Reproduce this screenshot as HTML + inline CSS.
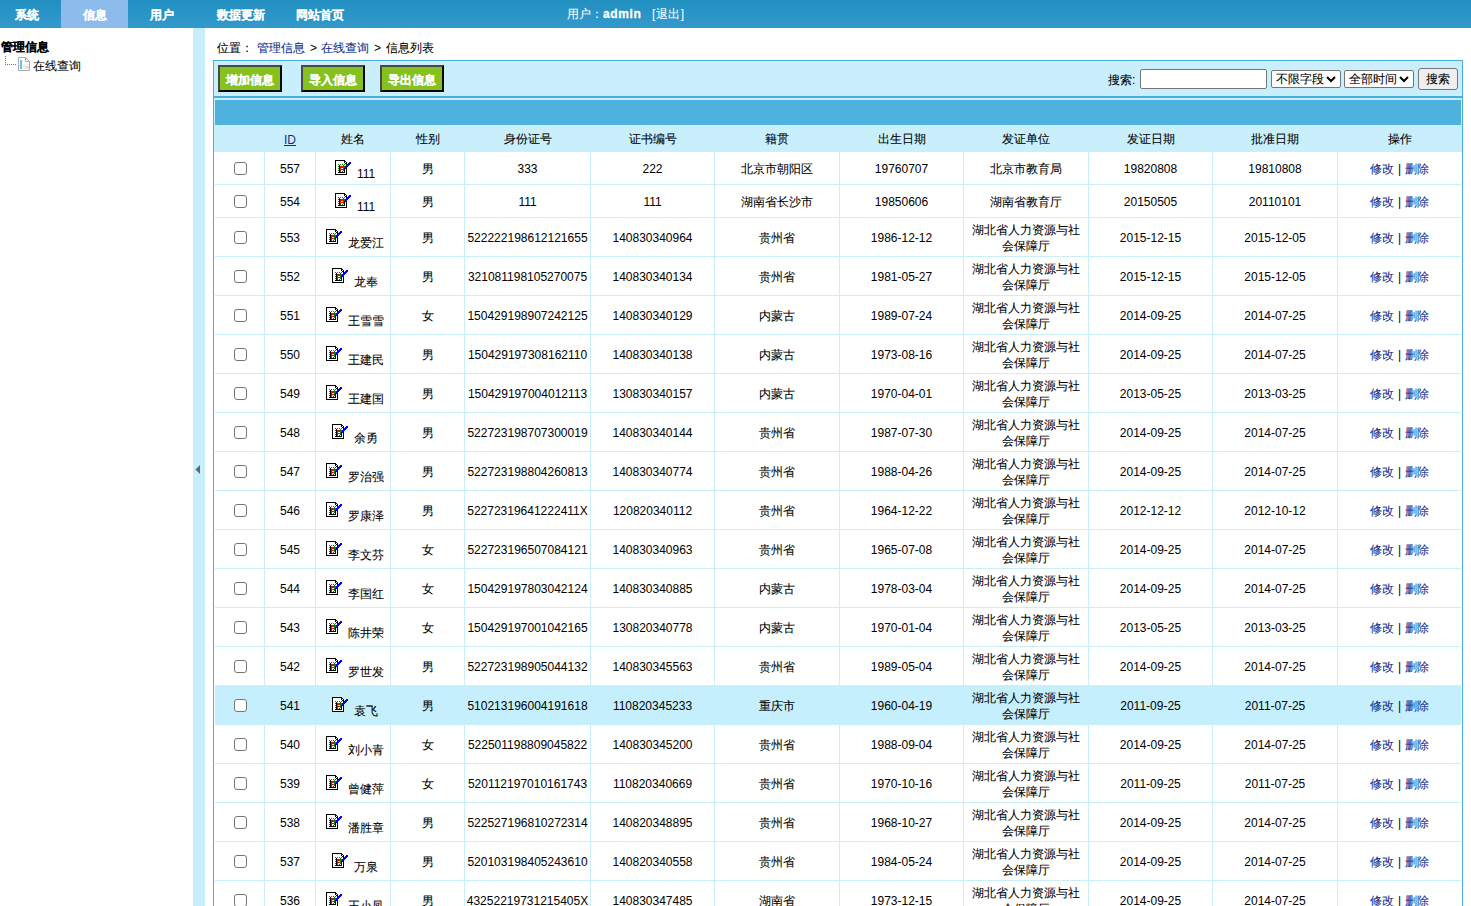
<!DOCTYPE html>
<html><head><meta charset="utf-8">
<style>
*{box-sizing:border-box}
html,body{margin:0;padding:0;width:1471px;height:906px;overflow:hidden;background:#fff;font-family:"Liberation Sans",sans-serif;font-size:12px;color:#000}
em{font-style:normal;-webkit-text-stroke:0.08px currentColor}
#nav b em,.btn em{-webkit-text-stroke:0.15px #fff}
#nav{position:absolute;left:0;top:0;width:1471px;height:28px;background:linear-gradient(#2190c0,#3399cc)}
#nav .act{position:absolute;left:61px;top:0;width:67px;height:28px;background:#8cbbec}
#nav b{position:absolute;top:8px;color:#fff;-webkit-text-stroke:0.3px #fff;font-size:12px;line-height:14px;white-space:nowrap}
#nav .usr{position:absolute;left:567px;top:7px;color:#fff;line-height:14px;white-space:nowrap}
#tree{position:absolute;left:1px;top:39px}
#tree .t1{font-weight:bold;line-height:14px;position:relative;top:1px}
#strip{position:absolute;left:193px;top:28px;width:12px;height:878px;background:#c6eefc}
#crumb{position:absolute;left:217px;top:41px;line-height:14px;white-space:nowrap}
#crumb a{color:#112e8a}
#box{position:absolute;left:213px;top:60px;width:1250px;height:900px;border:1px solid #4aaedc;border-bottom:0;background:#fff}
#tool{position:relative;height:37px;background:#c9effd;border-bottom:2px solid #4aaedc}
.btn{position:absolute;top:4px;width:64px;height:27px;background:#85c11f;border:2px solid;border-color:#4b4649 #000 #000 #4b4649;color:#fff;font-weight:bold;text-align:center;line-height:27px;-webkit-text-stroke:0.3px #fff}
#gap{height:2px;background:#c9effd}
#hbar{height:25px;border-left:1px solid #c9effd;border-right:1px solid #c9effd;background:#4fb2de}
#hrow{height:27px;background:#c9effd}
table{border-collapse:separate;border-spacing:0;table-layout:fixed;margin-left:1px;width:1246px}
td{border-right:1px solid #c9effd;border-bottom:1px solid #c9effd;text-align:center;padding:2px 0 0 0;vertical-align:middle;line-height:16px}
td:last-child{border-right:0}
#hrow td{border-color:#c9effd;height:27px;padding-top:2px}
#hrow a{color:#112e8a;text-decoration:underline;position:relative;top:1px}
.hl td{background:#c6effd;border-color:#c6effd}
.op{word-spacing:1px}
.op a{color:#112e8a}
.cb{display:inline-block;width:13px;height:13px;border:1px solid #767676;border-radius:3px;background:#fff;vertical-align:middle;position:relative;left:1px;top:-1px}
.ic{vertical-align:3px;margin-right:6px;position:relative;top:2px}
.nm span{position:relative;top:2px}
.nm{padding-left:4px}
.search{position:absolute;top:0;left:0}
.inp{position:absolute;border:1px solid #767676;background:#fff;border-radius:2px}
.sel{position:absolute;border:1px solid #767676;background:#fff;border-radius:2px;line-height:16px;padding-left:4px;white-space:nowrap}
.sel svg{position:absolute;right:4px;top:5px}
.sbtn{position:absolute;border:1px solid #767676;background:#efefef;border-radius:3px;text-align:center;line-height:20px}
</style></head><body>


<div id="nav">
 <div class="act"></div>
 <b style="left:15px"><em>系统</em></b>
 <b style="left:83px"><em>信息</em></b>
 <b style="left:150px"><em>用户</em></b>
 <b style="left:217px"><em>数据更新</em></b>
 <b style="left:296px"><em>网站首页</em></b>
 <div class="usr"><em>用户：</em><b style="position:static;letter-spacing:0.6px">admin</b></div><span style="position:absolute;left:652px;top:7px;color:#fff;line-height:14px;white-space:nowrap;letter-spacing:0.5px">[<em>退出</em>]</span>
</div>

<div id="tree">
 <div class="t1"><em>管理信息</em></div>
 <div style="position:relative;height:20px">
  <svg style="position:absolute;left:4px;top:3px" width="12" height="10"><rect x="0" y="0" width="1" height="1" fill="#777"/><rect x="0" y="2" width="1" height="1" fill="#777"/><rect x="0" y="4" width="1" height="1" fill="#777"/><rect x="0" y="6" width="1" height="1" fill="#777"/><rect x="0" y="8" width="1" height="1" fill="#777"/><rect x="2" y="8" width="1" height="1" fill="#777"/><rect x="4" y="8" width="1" height="1" fill="#777"/><rect x="6" y="8" width="1" height="1" fill="#777"/><rect x="8" y="8" width="1" height="1" fill="#777"/><rect x="10" y="8" width="1" height="1" fill="#777"/></svg>
  <svg style="position:absolute;left:17px;top:4px" width="13" height="15"><path d="M0.5 0.5H7.5L11.5 4.5V13.5H0.5Z" fill="#fff" stroke="#aaa"/><path d="M7.5 0.5V4.5H11.5" fill="none" stroke="#aaa"/><rect x="5" y="7" width="6" height="5" fill="#f2f2f2"/><rect x="7" y="9" width="4" height="3" fill="#e4e4e4"/><rect x="2" y="3" width="2" height="9" fill="#6cbde8"/></svg>
  <span style="position:absolute;left:32px;top:5px;white-space:nowrap"><em>在线查询</em></span>
 </div>
</div>

<div id="strip"><svg style="position:absolute;left:2px;top:437px" width="6" height="9"><path d="M5 0V9L0.5 4.5Z" fill="#666"/></svg></div>

<div id="crumb"><span style="position:absolute;left:0"><em>位置：</em></span><a style="position:absolute;left:40px"><em>管理信息</em></a><span style="position:absolute;left:93px">&gt;</span><a style="position:absolute;left:104px"><em>在线查询</em></a><span style="position:absolute;left:157px">&gt;</span><span style="position:absolute;left:169px"><em>信息列表</em></span></div>

<div id="box">
 <div id="tool">
  <div class="btn" style="left:4px"><em>增加信息</em></div>
  <div class="btn" style="left:87px"><em>导入信息</em></div>
  <div class="btn" style="left:166px"><em>导出信息</em></div>
  <span style="position:absolute;left:894px;top:12px;line-height:14px"><em>搜索</em>:</span>
  <div class="inp" style="left:926px;top:8px;width:127px;height:20px"></div>
  <div class="sel" style="left:1057px;top:9px;width:70px;height:18px"><em>不限字段</em><svg width="10" height="7"><path d="M1 1L5 5L9 1" fill="none" stroke="#000" stroke-width="2"/></svg></div>
  <div class="sel" style="left:1130px;top:9px;width:70px;height:18px"><em>全部时间</em><svg width="10" height="7"><path d="M1 1L5 5L9 1" fill="none" stroke="#000" stroke-width="2"/></svg></div>
  <div class="sbtn" style="left:1204px;top:7px;width:40px;height:22px"><em>搜索</em></div>
 </div>
 <div id="gap"></div>
 <div id="hbar"></div>
 <div id="hrow">
 <table><colgroup><col style="width:50px"><col style="width:51px"><col style="width:75px"><col style="width:74px"><col style="width:126px"><col style="width:124px"><col style="width:125px"><col style="width:124px"><col style="width:125px"><col style="width:124px"><col style="width:125px"><col style="width:123px"></colgroup>
 <tr><td></td><td><a>ID</a></td><td><em>姓名</em></td><td><em>性别</em></td><td><em>身份证号</em></td><td><em>证书编号</em></td><td><em>籍贯</em></td><td><em>出生日期</em></td><td><em>发证单位</em></td><td><em>发证日期</em></td><td><em>批准日期</em></td><td><em>操作</em></td></tr>
 </table>
 </div>
 <table><colgroup><col style="width:50px"><col style="width:51px"><col style="width:75px"><col style="width:74px"><col style="width:126px"><col style="width:124px"><col style="width:125px"><col style="width:124px"><col style="width:125px"><col style="width:124px"><col style="width:125px"><col style="width:123px"></colgroup>
<tr style="height:33px"><td><i class="cb"></i></td><td>557</td><td class="nm"><svg class="ic" width="16" height="15"><rect x="0" y="0" width="10" height="1" fill="#000"/><rect x="0" y="0" width="1" height="15" fill="#000"/><rect x="0" y="14" width="12" height="1" fill="#000"/><rect x="11" y="3" width="1" height="12" fill="#000"/><rect x="1" y="1" width="10" height="13" fill="#fff"/><rect x="9" y="1" width="1" height="1" fill="#000"/><rect x="10" y="1" width="1" height="1" fill="#000"/><rect x="10" y="2" width="1" height="1" fill="#fff"/><rect x="11" y="2" width="1" height="1" fill="#000"/><rect x="9" y="2" width="1" height="1" fill="#000"/><rect x="10" y="3" width="1" height="1" fill="#000"/><rect x="3" y="4" width="1" height="1" fill="#080"/><rect x="5" y="4" width="1" height="1" fill="#080"/><rect x="7" y="4" width="1" height="1" fill="#080"/><rect x="9" y="4" width="1" height="1" fill="#080"/><rect x="3" y="6" width="1" height="1" fill="#080"/><rect x="3" y="8" width="1" height="1" fill="#080"/><rect x="3" y="10" width="1" height="1" fill="#080"/><rect x="5" y="11" width="1" height="1" fill="#080"/><rect x="7" y="11" width="1" height="1" fill="#080"/><rect x="4" y="5" width="1" height="7" fill="#000"/><rect x="5" y="6" width="3" height="5" fill="#f00"/><rect x="6" y="8" width="2" height="1" fill="#fff"/><rect x="6" y="10" width="2" height="1" fill="#fff"/><rect x="8" y="5" width="1" height="4" fill="#080"/><rect x="9" y="6" width="1" height="2" fill="#080"/><rect x="8" y="9" width="1" height="2" fill="#080"/><rect x="3" y="12" width="7" height="1" fill="#000"/><rect x="9" y="8" width="1" height="5" fill="#000"/><rect x="10" y="6" width="1" height="1" fill="#00f"/><rect x="10" y="7" width="1" height="1" fill="#00f"/><rect x="10" y="8" width="1" height="1" fill="#00f"/><rect x="11" y="5" width="1" height="1" fill="#00f"/><rect x="11" y="6" width="1" height="1" fill="#00f"/><rect x="11" y="7" width="1" height="1" fill="#00f"/><rect x="12" y="4" width="1" height="1" fill="#00f"/><rect x="12" y="5" width="1" height="1" fill="#00f"/><rect x="12" y="6" width="1" height="1" fill="#00f"/><rect x="13" y="3" width="1" height="1" fill="#00f"/><rect x="13" y="4" width="1" height="1" fill="#00f"/><rect x="13" y="5" width="1" height="1" fill="#00f"/><rect x="14" y="2" width="1" height="1" fill="#00f"/><rect x="14" y="3" width="1" height="1" fill="#00f"/><rect x="14" y="4" width="1" height="1" fill="#00f"/><rect x="15" y="2" width="1" height="1" fill="#00f"/><rect x="15" y="3" width="1" height="1" fill="#00f"/></svg><span>111</span></td><td><em>男</em></td><td>333</td><td>222</td><td><em>北京市朝阳区</em></td><td>19760707</td><td class="u"><em>北京市教育局</em></td><td>19820808</td><td>19810808</td><td class="op"><a><em>修改</em></a> | <a><em>删除</em></a></td></tr>
<tr style="height:33px"><td><i class="cb"></i></td><td>554</td><td class="nm"><svg class="ic" width="16" height="15"><rect x="0" y="0" width="10" height="1" fill="#000"/><rect x="0" y="0" width="1" height="15" fill="#000"/><rect x="0" y="14" width="12" height="1" fill="#000"/><rect x="11" y="3" width="1" height="12" fill="#000"/><rect x="1" y="1" width="10" height="13" fill="#fff"/><rect x="9" y="1" width="1" height="1" fill="#000"/><rect x="10" y="1" width="1" height="1" fill="#000"/><rect x="10" y="2" width="1" height="1" fill="#fff"/><rect x="11" y="2" width="1" height="1" fill="#000"/><rect x="9" y="2" width="1" height="1" fill="#000"/><rect x="10" y="3" width="1" height="1" fill="#000"/><rect x="3" y="4" width="1" height="1" fill="#080"/><rect x="5" y="4" width="1" height="1" fill="#080"/><rect x="7" y="4" width="1" height="1" fill="#080"/><rect x="9" y="4" width="1" height="1" fill="#080"/><rect x="3" y="6" width="1" height="1" fill="#080"/><rect x="3" y="8" width="1" height="1" fill="#080"/><rect x="3" y="10" width="1" height="1" fill="#080"/><rect x="5" y="11" width="1" height="1" fill="#080"/><rect x="7" y="11" width="1" height="1" fill="#080"/><rect x="4" y="5" width="1" height="7" fill="#000"/><rect x="5" y="6" width="3" height="5" fill="#f00"/><rect x="6" y="8" width="2" height="1" fill="#fff"/><rect x="6" y="10" width="2" height="1" fill="#fff"/><rect x="8" y="5" width="1" height="4" fill="#080"/><rect x="9" y="6" width="1" height="2" fill="#080"/><rect x="8" y="9" width="1" height="2" fill="#080"/><rect x="3" y="12" width="7" height="1" fill="#000"/><rect x="9" y="8" width="1" height="5" fill="#000"/><rect x="10" y="6" width="1" height="1" fill="#00f"/><rect x="10" y="7" width="1" height="1" fill="#00f"/><rect x="10" y="8" width="1" height="1" fill="#00f"/><rect x="11" y="5" width="1" height="1" fill="#00f"/><rect x="11" y="6" width="1" height="1" fill="#00f"/><rect x="11" y="7" width="1" height="1" fill="#00f"/><rect x="12" y="4" width="1" height="1" fill="#00f"/><rect x="12" y="5" width="1" height="1" fill="#00f"/><rect x="12" y="6" width="1" height="1" fill="#00f"/><rect x="13" y="3" width="1" height="1" fill="#00f"/><rect x="13" y="4" width="1" height="1" fill="#00f"/><rect x="13" y="5" width="1" height="1" fill="#00f"/><rect x="14" y="2" width="1" height="1" fill="#00f"/><rect x="14" y="3" width="1" height="1" fill="#00f"/><rect x="14" y="4" width="1" height="1" fill="#00f"/><rect x="15" y="2" width="1" height="1" fill="#00f"/><rect x="15" y="3" width="1" height="1" fill="#00f"/></svg><span>111</span></td><td><em>男</em></td><td>111</td><td>111</td><td><em>湖南省长沙市</em></td><td>19850606</td><td class="u"><em>湖南省教育厅</em></td><td>20150505</td><td>20110101</td><td class="op"><a><em>修改</em></a> | <a><em>删除</em></a></td></tr>
<tr style="height:39px"><td><i class="cb"></i></td><td>553</td><td class="nm"><svg class="ic" width="16" height="15"><rect x="0" y="0" width="10" height="1" fill="#000"/><rect x="0" y="0" width="1" height="15" fill="#000"/><rect x="0" y="14" width="12" height="1" fill="#000"/><rect x="11" y="3" width="1" height="12" fill="#000"/><rect x="1" y="1" width="10" height="13" fill="#fff"/><rect x="9" y="1" width="1" height="1" fill="#000"/><rect x="10" y="1" width="1" height="1" fill="#000"/><rect x="10" y="2" width="1" height="1" fill="#fff"/><rect x="11" y="2" width="1" height="1" fill="#000"/><rect x="9" y="2" width="1" height="1" fill="#000"/><rect x="10" y="3" width="1" height="1" fill="#000"/><rect x="3" y="4" width="1" height="1" fill="#080"/><rect x="5" y="4" width="1" height="1" fill="#080"/><rect x="7" y="4" width="1" height="1" fill="#080"/><rect x="9" y="4" width="1" height="1" fill="#080"/><rect x="3" y="6" width="1" height="1" fill="#080"/><rect x="3" y="8" width="1" height="1" fill="#080"/><rect x="3" y="10" width="1" height="1" fill="#080"/><rect x="5" y="11" width="1" height="1" fill="#080"/><rect x="7" y="11" width="1" height="1" fill="#080"/><rect x="4" y="5" width="1" height="7" fill="#000"/><rect x="5" y="6" width="3" height="5" fill="#f00"/><rect x="6" y="8" width="2" height="1" fill="#fff"/><rect x="6" y="10" width="2" height="1" fill="#fff"/><rect x="8" y="5" width="1" height="4" fill="#080"/><rect x="9" y="6" width="1" height="2" fill="#080"/><rect x="8" y="9" width="1" height="2" fill="#080"/><rect x="3" y="12" width="7" height="1" fill="#000"/><rect x="9" y="8" width="1" height="5" fill="#000"/><rect x="10" y="6" width="1" height="1" fill="#00f"/><rect x="10" y="7" width="1" height="1" fill="#00f"/><rect x="10" y="8" width="1" height="1" fill="#00f"/><rect x="11" y="5" width="1" height="1" fill="#00f"/><rect x="11" y="6" width="1" height="1" fill="#00f"/><rect x="11" y="7" width="1" height="1" fill="#00f"/><rect x="12" y="4" width="1" height="1" fill="#00f"/><rect x="12" y="5" width="1" height="1" fill="#00f"/><rect x="12" y="6" width="1" height="1" fill="#00f"/><rect x="13" y="3" width="1" height="1" fill="#00f"/><rect x="13" y="4" width="1" height="1" fill="#00f"/><rect x="13" y="5" width="1" height="1" fill="#00f"/><rect x="14" y="2" width="1" height="1" fill="#00f"/><rect x="14" y="3" width="1" height="1" fill="#00f"/><rect x="14" y="4" width="1" height="1" fill="#00f"/><rect x="15" y="2" width="1" height="1" fill="#00f"/><rect x="15" y="3" width="1" height="1" fill="#00f"/></svg><span><em>龙爱江</em></span></td><td><em>男</em></td><td>522222198612121655</td><td>140830340964</td><td><em>贵州省</em></td><td>1986-12-12</td><td class="u"><em>湖北省人力资源与社</em><br><em>会保障厅</em></td><td>2015-12-15</td><td>2015-12-05</td><td class="op"><a><em>修改</em></a> | <a><em>删除</em></a></td></tr>
<tr style="height:39px"><td><i class="cb"></i></td><td>552</td><td class="nm"><svg class="ic" width="16" height="15"><rect x="0" y="0" width="10" height="1" fill="#000"/><rect x="0" y="0" width="1" height="15" fill="#000"/><rect x="0" y="14" width="12" height="1" fill="#000"/><rect x="11" y="3" width="1" height="12" fill="#000"/><rect x="1" y="1" width="10" height="13" fill="#fff"/><rect x="9" y="1" width="1" height="1" fill="#000"/><rect x="10" y="1" width="1" height="1" fill="#000"/><rect x="10" y="2" width="1" height="1" fill="#fff"/><rect x="11" y="2" width="1" height="1" fill="#000"/><rect x="9" y="2" width="1" height="1" fill="#000"/><rect x="10" y="3" width="1" height="1" fill="#000"/><rect x="3" y="4" width="1" height="1" fill="#080"/><rect x="5" y="4" width="1" height="1" fill="#080"/><rect x="7" y="4" width="1" height="1" fill="#080"/><rect x="9" y="4" width="1" height="1" fill="#080"/><rect x="3" y="6" width="1" height="1" fill="#080"/><rect x="3" y="8" width="1" height="1" fill="#080"/><rect x="3" y="10" width="1" height="1" fill="#080"/><rect x="5" y="11" width="1" height="1" fill="#080"/><rect x="7" y="11" width="1" height="1" fill="#080"/><rect x="4" y="5" width="1" height="7" fill="#000"/><rect x="5" y="6" width="3" height="5" fill="#f00"/><rect x="6" y="8" width="2" height="1" fill="#fff"/><rect x="6" y="10" width="2" height="1" fill="#fff"/><rect x="8" y="5" width="1" height="4" fill="#080"/><rect x="9" y="6" width="1" height="2" fill="#080"/><rect x="8" y="9" width="1" height="2" fill="#080"/><rect x="3" y="12" width="7" height="1" fill="#000"/><rect x="9" y="8" width="1" height="5" fill="#000"/><rect x="10" y="6" width="1" height="1" fill="#00f"/><rect x="10" y="7" width="1" height="1" fill="#00f"/><rect x="10" y="8" width="1" height="1" fill="#00f"/><rect x="11" y="5" width="1" height="1" fill="#00f"/><rect x="11" y="6" width="1" height="1" fill="#00f"/><rect x="11" y="7" width="1" height="1" fill="#00f"/><rect x="12" y="4" width="1" height="1" fill="#00f"/><rect x="12" y="5" width="1" height="1" fill="#00f"/><rect x="12" y="6" width="1" height="1" fill="#00f"/><rect x="13" y="3" width="1" height="1" fill="#00f"/><rect x="13" y="4" width="1" height="1" fill="#00f"/><rect x="13" y="5" width="1" height="1" fill="#00f"/><rect x="14" y="2" width="1" height="1" fill="#00f"/><rect x="14" y="3" width="1" height="1" fill="#00f"/><rect x="14" y="4" width="1" height="1" fill="#00f"/><rect x="15" y="2" width="1" height="1" fill="#00f"/><rect x="15" y="3" width="1" height="1" fill="#00f"/></svg><span><em>龙奉</em></span></td><td><em>男</em></td><td>321081198105270075</td><td>140830340134</td><td><em>贵州省</em></td><td>1981-05-27</td><td class="u"><em>湖北省人力资源与社</em><br><em>会保障厅</em></td><td>2015-12-15</td><td>2015-12-05</td><td class="op"><a><em>修改</em></a> | <a><em>删除</em></a></td></tr>
<tr style="height:39px"><td><i class="cb"></i></td><td>551</td><td class="nm"><svg class="ic" width="16" height="15"><rect x="0" y="0" width="10" height="1" fill="#000"/><rect x="0" y="0" width="1" height="15" fill="#000"/><rect x="0" y="14" width="12" height="1" fill="#000"/><rect x="11" y="3" width="1" height="12" fill="#000"/><rect x="1" y="1" width="10" height="13" fill="#fff"/><rect x="9" y="1" width="1" height="1" fill="#000"/><rect x="10" y="1" width="1" height="1" fill="#000"/><rect x="10" y="2" width="1" height="1" fill="#fff"/><rect x="11" y="2" width="1" height="1" fill="#000"/><rect x="9" y="2" width="1" height="1" fill="#000"/><rect x="10" y="3" width="1" height="1" fill="#000"/><rect x="3" y="4" width="1" height="1" fill="#080"/><rect x="5" y="4" width="1" height="1" fill="#080"/><rect x="7" y="4" width="1" height="1" fill="#080"/><rect x="9" y="4" width="1" height="1" fill="#080"/><rect x="3" y="6" width="1" height="1" fill="#080"/><rect x="3" y="8" width="1" height="1" fill="#080"/><rect x="3" y="10" width="1" height="1" fill="#080"/><rect x="5" y="11" width="1" height="1" fill="#080"/><rect x="7" y="11" width="1" height="1" fill="#080"/><rect x="4" y="5" width="1" height="7" fill="#000"/><rect x="5" y="6" width="3" height="5" fill="#f00"/><rect x="6" y="8" width="2" height="1" fill="#fff"/><rect x="6" y="10" width="2" height="1" fill="#fff"/><rect x="8" y="5" width="1" height="4" fill="#080"/><rect x="9" y="6" width="1" height="2" fill="#080"/><rect x="8" y="9" width="1" height="2" fill="#080"/><rect x="3" y="12" width="7" height="1" fill="#000"/><rect x="9" y="8" width="1" height="5" fill="#000"/><rect x="10" y="6" width="1" height="1" fill="#00f"/><rect x="10" y="7" width="1" height="1" fill="#00f"/><rect x="10" y="8" width="1" height="1" fill="#00f"/><rect x="11" y="5" width="1" height="1" fill="#00f"/><rect x="11" y="6" width="1" height="1" fill="#00f"/><rect x="11" y="7" width="1" height="1" fill="#00f"/><rect x="12" y="4" width="1" height="1" fill="#00f"/><rect x="12" y="5" width="1" height="1" fill="#00f"/><rect x="12" y="6" width="1" height="1" fill="#00f"/><rect x="13" y="3" width="1" height="1" fill="#00f"/><rect x="13" y="4" width="1" height="1" fill="#00f"/><rect x="13" y="5" width="1" height="1" fill="#00f"/><rect x="14" y="2" width="1" height="1" fill="#00f"/><rect x="14" y="3" width="1" height="1" fill="#00f"/><rect x="14" y="4" width="1" height="1" fill="#00f"/><rect x="15" y="2" width="1" height="1" fill="#00f"/><rect x="15" y="3" width="1" height="1" fill="#00f"/></svg><span><em>王雪雪</em></span></td><td><em>女</em></td><td>150429198907242125</td><td>140830340129</td><td><em>内蒙古</em></td><td>1989-07-24</td><td class="u"><em>湖北省人力资源与社</em><br><em>会保障厅</em></td><td>2014-09-25</td><td>2014-07-25</td><td class="op"><a><em>修改</em></a> | <a><em>删除</em></a></td></tr>
<tr style="height:39px"><td><i class="cb"></i></td><td>550</td><td class="nm"><svg class="ic" width="16" height="15"><rect x="0" y="0" width="10" height="1" fill="#000"/><rect x="0" y="0" width="1" height="15" fill="#000"/><rect x="0" y="14" width="12" height="1" fill="#000"/><rect x="11" y="3" width="1" height="12" fill="#000"/><rect x="1" y="1" width="10" height="13" fill="#fff"/><rect x="9" y="1" width="1" height="1" fill="#000"/><rect x="10" y="1" width="1" height="1" fill="#000"/><rect x="10" y="2" width="1" height="1" fill="#fff"/><rect x="11" y="2" width="1" height="1" fill="#000"/><rect x="9" y="2" width="1" height="1" fill="#000"/><rect x="10" y="3" width="1" height="1" fill="#000"/><rect x="3" y="4" width="1" height="1" fill="#080"/><rect x="5" y="4" width="1" height="1" fill="#080"/><rect x="7" y="4" width="1" height="1" fill="#080"/><rect x="9" y="4" width="1" height="1" fill="#080"/><rect x="3" y="6" width="1" height="1" fill="#080"/><rect x="3" y="8" width="1" height="1" fill="#080"/><rect x="3" y="10" width="1" height="1" fill="#080"/><rect x="5" y="11" width="1" height="1" fill="#080"/><rect x="7" y="11" width="1" height="1" fill="#080"/><rect x="4" y="5" width="1" height="7" fill="#000"/><rect x="5" y="6" width="3" height="5" fill="#f00"/><rect x="6" y="8" width="2" height="1" fill="#fff"/><rect x="6" y="10" width="2" height="1" fill="#fff"/><rect x="8" y="5" width="1" height="4" fill="#080"/><rect x="9" y="6" width="1" height="2" fill="#080"/><rect x="8" y="9" width="1" height="2" fill="#080"/><rect x="3" y="12" width="7" height="1" fill="#000"/><rect x="9" y="8" width="1" height="5" fill="#000"/><rect x="10" y="6" width="1" height="1" fill="#00f"/><rect x="10" y="7" width="1" height="1" fill="#00f"/><rect x="10" y="8" width="1" height="1" fill="#00f"/><rect x="11" y="5" width="1" height="1" fill="#00f"/><rect x="11" y="6" width="1" height="1" fill="#00f"/><rect x="11" y="7" width="1" height="1" fill="#00f"/><rect x="12" y="4" width="1" height="1" fill="#00f"/><rect x="12" y="5" width="1" height="1" fill="#00f"/><rect x="12" y="6" width="1" height="1" fill="#00f"/><rect x="13" y="3" width="1" height="1" fill="#00f"/><rect x="13" y="4" width="1" height="1" fill="#00f"/><rect x="13" y="5" width="1" height="1" fill="#00f"/><rect x="14" y="2" width="1" height="1" fill="#00f"/><rect x="14" y="3" width="1" height="1" fill="#00f"/><rect x="14" y="4" width="1" height="1" fill="#00f"/><rect x="15" y="2" width="1" height="1" fill="#00f"/><rect x="15" y="3" width="1" height="1" fill="#00f"/></svg><span><em>王建民</em></span></td><td><em>男</em></td><td>150429197308162110</td><td>140830340138</td><td><em>内蒙古</em></td><td>1973-08-16</td><td class="u"><em>湖北省人力资源与社</em><br><em>会保障厅</em></td><td>2014-09-25</td><td>2014-07-25</td><td class="op"><a><em>修改</em></a> | <a><em>删除</em></a></td></tr>
<tr style="height:39px"><td><i class="cb"></i></td><td>549</td><td class="nm"><svg class="ic" width="16" height="15"><rect x="0" y="0" width="10" height="1" fill="#000"/><rect x="0" y="0" width="1" height="15" fill="#000"/><rect x="0" y="14" width="12" height="1" fill="#000"/><rect x="11" y="3" width="1" height="12" fill="#000"/><rect x="1" y="1" width="10" height="13" fill="#fff"/><rect x="9" y="1" width="1" height="1" fill="#000"/><rect x="10" y="1" width="1" height="1" fill="#000"/><rect x="10" y="2" width="1" height="1" fill="#fff"/><rect x="11" y="2" width="1" height="1" fill="#000"/><rect x="9" y="2" width="1" height="1" fill="#000"/><rect x="10" y="3" width="1" height="1" fill="#000"/><rect x="3" y="4" width="1" height="1" fill="#080"/><rect x="5" y="4" width="1" height="1" fill="#080"/><rect x="7" y="4" width="1" height="1" fill="#080"/><rect x="9" y="4" width="1" height="1" fill="#080"/><rect x="3" y="6" width="1" height="1" fill="#080"/><rect x="3" y="8" width="1" height="1" fill="#080"/><rect x="3" y="10" width="1" height="1" fill="#080"/><rect x="5" y="11" width="1" height="1" fill="#080"/><rect x="7" y="11" width="1" height="1" fill="#080"/><rect x="4" y="5" width="1" height="7" fill="#000"/><rect x="5" y="6" width="3" height="5" fill="#f00"/><rect x="6" y="8" width="2" height="1" fill="#fff"/><rect x="6" y="10" width="2" height="1" fill="#fff"/><rect x="8" y="5" width="1" height="4" fill="#080"/><rect x="9" y="6" width="1" height="2" fill="#080"/><rect x="8" y="9" width="1" height="2" fill="#080"/><rect x="3" y="12" width="7" height="1" fill="#000"/><rect x="9" y="8" width="1" height="5" fill="#000"/><rect x="10" y="6" width="1" height="1" fill="#00f"/><rect x="10" y="7" width="1" height="1" fill="#00f"/><rect x="10" y="8" width="1" height="1" fill="#00f"/><rect x="11" y="5" width="1" height="1" fill="#00f"/><rect x="11" y="6" width="1" height="1" fill="#00f"/><rect x="11" y="7" width="1" height="1" fill="#00f"/><rect x="12" y="4" width="1" height="1" fill="#00f"/><rect x="12" y="5" width="1" height="1" fill="#00f"/><rect x="12" y="6" width="1" height="1" fill="#00f"/><rect x="13" y="3" width="1" height="1" fill="#00f"/><rect x="13" y="4" width="1" height="1" fill="#00f"/><rect x="13" y="5" width="1" height="1" fill="#00f"/><rect x="14" y="2" width="1" height="1" fill="#00f"/><rect x="14" y="3" width="1" height="1" fill="#00f"/><rect x="14" y="4" width="1" height="1" fill="#00f"/><rect x="15" y="2" width="1" height="1" fill="#00f"/><rect x="15" y="3" width="1" height="1" fill="#00f"/></svg><span><em>王建国</em></span></td><td><em>男</em></td><td>150429197004012113</td><td>130830340157</td><td><em>内蒙古</em></td><td>1970-04-01</td><td class="u"><em>湖北省人力资源与社</em><br><em>会保障厅</em></td><td>2013-05-25</td><td>2013-03-25</td><td class="op"><a><em>修改</em></a> | <a><em>删除</em></a></td></tr>
<tr style="height:39px"><td><i class="cb"></i></td><td>548</td><td class="nm"><svg class="ic" width="16" height="15"><rect x="0" y="0" width="10" height="1" fill="#000"/><rect x="0" y="0" width="1" height="15" fill="#000"/><rect x="0" y="14" width="12" height="1" fill="#000"/><rect x="11" y="3" width="1" height="12" fill="#000"/><rect x="1" y="1" width="10" height="13" fill="#fff"/><rect x="9" y="1" width="1" height="1" fill="#000"/><rect x="10" y="1" width="1" height="1" fill="#000"/><rect x="10" y="2" width="1" height="1" fill="#fff"/><rect x="11" y="2" width="1" height="1" fill="#000"/><rect x="9" y="2" width="1" height="1" fill="#000"/><rect x="10" y="3" width="1" height="1" fill="#000"/><rect x="3" y="4" width="1" height="1" fill="#080"/><rect x="5" y="4" width="1" height="1" fill="#080"/><rect x="7" y="4" width="1" height="1" fill="#080"/><rect x="9" y="4" width="1" height="1" fill="#080"/><rect x="3" y="6" width="1" height="1" fill="#080"/><rect x="3" y="8" width="1" height="1" fill="#080"/><rect x="3" y="10" width="1" height="1" fill="#080"/><rect x="5" y="11" width="1" height="1" fill="#080"/><rect x="7" y="11" width="1" height="1" fill="#080"/><rect x="4" y="5" width="1" height="7" fill="#000"/><rect x="5" y="6" width="3" height="5" fill="#f00"/><rect x="6" y="8" width="2" height="1" fill="#fff"/><rect x="6" y="10" width="2" height="1" fill="#fff"/><rect x="8" y="5" width="1" height="4" fill="#080"/><rect x="9" y="6" width="1" height="2" fill="#080"/><rect x="8" y="9" width="1" height="2" fill="#080"/><rect x="3" y="12" width="7" height="1" fill="#000"/><rect x="9" y="8" width="1" height="5" fill="#000"/><rect x="10" y="6" width="1" height="1" fill="#00f"/><rect x="10" y="7" width="1" height="1" fill="#00f"/><rect x="10" y="8" width="1" height="1" fill="#00f"/><rect x="11" y="5" width="1" height="1" fill="#00f"/><rect x="11" y="6" width="1" height="1" fill="#00f"/><rect x="11" y="7" width="1" height="1" fill="#00f"/><rect x="12" y="4" width="1" height="1" fill="#00f"/><rect x="12" y="5" width="1" height="1" fill="#00f"/><rect x="12" y="6" width="1" height="1" fill="#00f"/><rect x="13" y="3" width="1" height="1" fill="#00f"/><rect x="13" y="4" width="1" height="1" fill="#00f"/><rect x="13" y="5" width="1" height="1" fill="#00f"/><rect x="14" y="2" width="1" height="1" fill="#00f"/><rect x="14" y="3" width="1" height="1" fill="#00f"/><rect x="14" y="4" width="1" height="1" fill="#00f"/><rect x="15" y="2" width="1" height="1" fill="#00f"/><rect x="15" y="3" width="1" height="1" fill="#00f"/></svg><span><em>余勇</em></span></td><td><em>男</em></td><td>522723198707300019</td><td>140830340144</td><td><em>贵州省</em></td><td>1987-07-30</td><td class="u"><em>湖北省人力资源与社</em><br><em>会保障厅</em></td><td>2014-09-25</td><td>2014-07-25</td><td class="op"><a><em>修改</em></a> | <a><em>删除</em></a></td></tr>
<tr style="height:39px"><td><i class="cb"></i></td><td>547</td><td class="nm"><svg class="ic" width="16" height="15"><rect x="0" y="0" width="10" height="1" fill="#000"/><rect x="0" y="0" width="1" height="15" fill="#000"/><rect x="0" y="14" width="12" height="1" fill="#000"/><rect x="11" y="3" width="1" height="12" fill="#000"/><rect x="1" y="1" width="10" height="13" fill="#fff"/><rect x="9" y="1" width="1" height="1" fill="#000"/><rect x="10" y="1" width="1" height="1" fill="#000"/><rect x="10" y="2" width="1" height="1" fill="#fff"/><rect x="11" y="2" width="1" height="1" fill="#000"/><rect x="9" y="2" width="1" height="1" fill="#000"/><rect x="10" y="3" width="1" height="1" fill="#000"/><rect x="3" y="4" width="1" height="1" fill="#080"/><rect x="5" y="4" width="1" height="1" fill="#080"/><rect x="7" y="4" width="1" height="1" fill="#080"/><rect x="9" y="4" width="1" height="1" fill="#080"/><rect x="3" y="6" width="1" height="1" fill="#080"/><rect x="3" y="8" width="1" height="1" fill="#080"/><rect x="3" y="10" width="1" height="1" fill="#080"/><rect x="5" y="11" width="1" height="1" fill="#080"/><rect x="7" y="11" width="1" height="1" fill="#080"/><rect x="4" y="5" width="1" height="7" fill="#000"/><rect x="5" y="6" width="3" height="5" fill="#f00"/><rect x="6" y="8" width="2" height="1" fill="#fff"/><rect x="6" y="10" width="2" height="1" fill="#fff"/><rect x="8" y="5" width="1" height="4" fill="#080"/><rect x="9" y="6" width="1" height="2" fill="#080"/><rect x="8" y="9" width="1" height="2" fill="#080"/><rect x="3" y="12" width="7" height="1" fill="#000"/><rect x="9" y="8" width="1" height="5" fill="#000"/><rect x="10" y="6" width="1" height="1" fill="#00f"/><rect x="10" y="7" width="1" height="1" fill="#00f"/><rect x="10" y="8" width="1" height="1" fill="#00f"/><rect x="11" y="5" width="1" height="1" fill="#00f"/><rect x="11" y="6" width="1" height="1" fill="#00f"/><rect x="11" y="7" width="1" height="1" fill="#00f"/><rect x="12" y="4" width="1" height="1" fill="#00f"/><rect x="12" y="5" width="1" height="1" fill="#00f"/><rect x="12" y="6" width="1" height="1" fill="#00f"/><rect x="13" y="3" width="1" height="1" fill="#00f"/><rect x="13" y="4" width="1" height="1" fill="#00f"/><rect x="13" y="5" width="1" height="1" fill="#00f"/><rect x="14" y="2" width="1" height="1" fill="#00f"/><rect x="14" y="3" width="1" height="1" fill="#00f"/><rect x="14" y="4" width="1" height="1" fill="#00f"/><rect x="15" y="2" width="1" height="1" fill="#00f"/><rect x="15" y="3" width="1" height="1" fill="#00f"/></svg><span><em>罗治强</em></span></td><td><em>男</em></td><td>522723198804260813</td><td>140830340774</td><td><em>贵州省</em></td><td>1988-04-26</td><td class="u"><em>湖北省人力资源与社</em><br><em>会保障厅</em></td><td>2014-09-25</td><td>2014-07-25</td><td class="op"><a><em>修改</em></a> | <a><em>删除</em></a></td></tr>
<tr style="height:39px"><td><i class="cb"></i></td><td>546</td><td class="nm"><svg class="ic" width="16" height="15"><rect x="0" y="0" width="10" height="1" fill="#000"/><rect x="0" y="0" width="1" height="15" fill="#000"/><rect x="0" y="14" width="12" height="1" fill="#000"/><rect x="11" y="3" width="1" height="12" fill="#000"/><rect x="1" y="1" width="10" height="13" fill="#fff"/><rect x="9" y="1" width="1" height="1" fill="#000"/><rect x="10" y="1" width="1" height="1" fill="#000"/><rect x="10" y="2" width="1" height="1" fill="#fff"/><rect x="11" y="2" width="1" height="1" fill="#000"/><rect x="9" y="2" width="1" height="1" fill="#000"/><rect x="10" y="3" width="1" height="1" fill="#000"/><rect x="3" y="4" width="1" height="1" fill="#080"/><rect x="5" y="4" width="1" height="1" fill="#080"/><rect x="7" y="4" width="1" height="1" fill="#080"/><rect x="9" y="4" width="1" height="1" fill="#080"/><rect x="3" y="6" width="1" height="1" fill="#080"/><rect x="3" y="8" width="1" height="1" fill="#080"/><rect x="3" y="10" width="1" height="1" fill="#080"/><rect x="5" y="11" width="1" height="1" fill="#080"/><rect x="7" y="11" width="1" height="1" fill="#080"/><rect x="4" y="5" width="1" height="7" fill="#000"/><rect x="5" y="6" width="3" height="5" fill="#f00"/><rect x="6" y="8" width="2" height="1" fill="#fff"/><rect x="6" y="10" width="2" height="1" fill="#fff"/><rect x="8" y="5" width="1" height="4" fill="#080"/><rect x="9" y="6" width="1" height="2" fill="#080"/><rect x="8" y="9" width="1" height="2" fill="#080"/><rect x="3" y="12" width="7" height="1" fill="#000"/><rect x="9" y="8" width="1" height="5" fill="#000"/><rect x="10" y="6" width="1" height="1" fill="#00f"/><rect x="10" y="7" width="1" height="1" fill="#00f"/><rect x="10" y="8" width="1" height="1" fill="#00f"/><rect x="11" y="5" width="1" height="1" fill="#00f"/><rect x="11" y="6" width="1" height="1" fill="#00f"/><rect x="11" y="7" width="1" height="1" fill="#00f"/><rect x="12" y="4" width="1" height="1" fill="#00f"/><rect x="12" y="5" width="1" height="1" fill="#00f"/><rect x="12" y="6" width="1" height="1" fill="#00f"/><rect x="13" y="3" width="1" height="1" fill="#00f"/><rect x="13" y="4" width="1" height="1" fill="#00f"/><rect x="13" y="5" width="1" height="1" fill="#00f"/><rect x="14" y="2" width="1" height="1" fill="#00f"/><rect x="14" y="3" width="1" height="1" fill="#00f"/><rect x="14" y="4" width="1" height="1" fill="#00f"/><rect x="15" y="2" width="1" height="1" fill="#00f"/><rect x="15" y="3" width="1" height="1" fill="#00f"/></svg><span><em>罗康泽</em></span></td><td><em>男</em></td><td>52272319641222411X</td><td>120820340112</td><td><em>贵州省</em></td><td>1964-12-22</td><td class="u"><em>湖北省人力资源与社</em><br><em>会保障厅</em></td><td>2012-12-12</td><td>2012-10-12</td><td class="op"><a><em>修改</em></a> | <a><em>删除</em></a></td></tr>
<tr style="height:39px"><td><i class="cb"></i></td><td>545</td><td class="nm"><svg class="ic" width="16" height="15"><rect x="0" y="0" width="10" height="1" fill="#000"/><rect x="0" y="0" width="1" height="15" fill="#000"/><rect x="0" y="14" width="12" height="1" fill="#000"/><rect x="11" y="3" width="1" height="12" fill="#000"/><rect x="1" y="1" width="10" height="13" fill="#fff"/><rect x="9" y="1" width="1" height="1" fill="#000"/><rect x="10" y="1" width="1" height="1" fill="#000"/><rect x="10" y="2" width="1" height="1" fill="#fff"/><rect x="11" y="2" width="1" height="1" fill="#000"/><rect x="9" y="2" width="1" height="1" fill="#000"/><rect x="10" y="3" width="1" height="1" fill="#000"/><rect x="3" y="4" width="1" height="1" fill="#080"/><rect x="5" y="4" width="1" height="1" fill="#080"/><rect x="7" y="4" width="1" height="1" fill="#080"/><rect x="9" y="4" width="1" height="1" fill="#080"/><rect x="3" y="6" width="1" height="1" fill="#080"/><rect x="3" y="8" width="1" height="1" fill="#080"/><rect x="3" y="10" width="1" height="1" fill="#080"/><rect x="5" y="11" width="1" height="1" fill="#080"/><rect x="7" y="11" width="1" height="1" fill="#080"/><rect x="4" y="5" width="1" height="7" fill="#000"/><rect x="5" y="6" width="3" height="5" fill="#f00"/><rect x="6" y="8" width="2" height="1" fill="#fff"/><rect x="6" y="10" width="2" height="1" fill="#fff"/><rect x="8" y="5" width="1" height="4" fill="#080"/><rect x="9" y="6" width="1" height="2" fill="#080"/><rect x="8" y="9" width="1" height="2" fill="#080"/><rect x="3" y="12" width="7" height="1" fill="#000"/><rect x="9" y="8" width="1" height="5" fill="#000"/><rect x="10" y="6" width="1" height="1" fill="#00f"/><rect x="10" y="7" width="1" height="1" fill="#00f"/><rect x="10" y="8" width="1" height="1" fill="#00f"/><rect x="11" y="5" width="1" height="1" fill="#00f"/><rect x="11" y="6" width="1" height="1" fill="#00f"/><rect x="11" y="7" width="1" height="1" fill="#00f"/><rect x="12" y="4" width="1" height="1" fill="#00f"/><rect x="12" y="5" width="1" height="1" fill="#00f"/><rect x="12" y="6" width="1" height="1" fill="#00f"/><rect x="13" y="3" width="1" height="1" fill="#00f"/><rect x="13" y="4" width="1" height="1" fill="#00f"/><rect x="13" y="5" width="1" height="1" fill="#00f"/><rect x="14" y="2" width="1" height="1" fill="#00f"/><rect x="14" y="3" width="1" height="1" fill="#00f"/><rect x="14" y="4" width="1" height="1" fill="#00f"/><rect x="15" y="2" width="1" height="1" fill="#00f"/><rect x="15" y="3" width="1" height="1" fill="#00f"/></svg><span><em>李文芬</em></span></td><td><em>女</em></td><td>522723196507084121</td><td>140830340963</td><td><em>贵州省</em></td><td>1965-07-08</td><td class="u"><em>湖北省人力资源与社</em><br><em>会保障厅</em></td><td>2014-09-25</td><td>2014-07-25</td><td class="op"><a><em>修改</em></a> | <a><em>删除</em></a></td></tr>
<tr style="height:39px"><td><i class="cb"></i></td><td>544</td><td class="nm"><svg class="ic" width="16" height="15"><rect x="0" y="0" width="10" height="1" fill="#000"/><rect x="0" y="0" width="1" height="15" fill="#000"/><rect x="0" y="14" width="12" height="1" fill="#000"/><rect x="11" y="3" width="1" height="12" fill="#000"/><rect x="1" y="1" width="10" height="13" fill="#fff"/><rect x="9" y="1" width="1" height="1" fill="#000"/><rect x="10" y="1" width="1" height="1" fill="#000"/><rect x="10" y="2" width="1" height="1" fill="#fff"/><rect x="11" y="2" width="1" height="1" fill="#000"/><rect x="9" y="2" width="1" height="1" fill="#000"/><rect x="10" y="3" width="1" height="1" fill="#000"/><rect x="3" y="4" width="1" height="1" fill="#080"/><rect x="5" y="4" width="1" height="1" fill="#080"/><rect x="7" y="4" width="1" height="1" fill="#080"/><rect x="9" y="4" width="1" height="1" fill="#080"/><rect x="3" y="6" width="1" height="1" fill="#080"/><rect x="3" y="8" width="1" height="1" fill="#080"/><rect x="3" y="10" width="1" height="1" fill="#080"/><rect x="5" y="11" width="1" height="1" fill="#080"/><rect x="7" y="11" width="1" height="1" fill="#080"/><rect x="4" y="5" width="1" height="7" fill="#000"/><rect x="5" y="6" width="3" height="5" fill="#f00"/><rect x="6" y="8" width="2" height="1" fill="#fff"/><rect x="6" y="10" width="2" height="1" fill="#fff"/><rect x="8" y="5" width="1" height="4" fill="#080"/><rect x="9" y="6" width="1" height="2" fill="#080"/><rect x="8" y="9" width="1" height="2" fill="#080"/><rect x="3" y="12" width="7" height="1" fill="#000"/><rect x="9" y="8" width="1" height="5" fill="#000"/><rect x="10" y="6" width="1" height="1" fill="#00f"/><rect x="10" y="7" width="1" height="1" fill="#00f"/><rect x="10" y="8" width="1" height="1" fill="#00f"/><rect x="11" y="5" width="1" height="1" fill="#00f"/><rect x="11" y="6" width="1" height="1" fill="#00f"/><rect x="11" y="7" width="1" height="1" fill="#00f"/><rect x="12" y="4" width="1" height="1" fill="#00f"/><rect x="12" y="5" width="1" height="1" fill="#00f"/><rect x="12" y="6" width="1" height="1" fill="#00f"/><rect x="13" y="3" width="1" height="1" fill="#00f"/><rect x="13" y="4" width="1" height="1" fill="#00f"/><rect x="13" y="5" width="1" height="1" fill="#00f"/><rect x="14" y="2" width="1" height="1" fill="#00f"/><rect x="14" y="3" width="1" height="1" fill="#00f"/><rect x="14" y="4" width="1" height="1" fill="#00f"/><rect x="15" y="2" width="1" height="1" fill="#00f"/><rect x="15" y="3" width="1" height="1" fill="#00f"/></svg><span><em>李国红</em></span></td><td><em>女</em></td><td>150429197803042124</td><td>140830340885</td><td><em>内蒙古</em></td><td>1978-03-04</td><td class="u"><em>湖北省人力资源与社</em><br><em>会保障厅</em></td><td>2014-09-25</td><td>2014-07-25</td><td class="op"><a><em>修改</em></a> | <a><em>删除</em></a></td></tr>
<tr style="height:39px"><td><i class="cb"></i></td><td>543</td><td class="nm"><svg class="ic" width="16" height="15"><rect x="0" y="0" width="10" height="1" fill="#000"/><rect x="0" y="0" width="1" height="15" fill="#000"/><rect x="0" y="14" width="12" height="1" fill="#000"/><rect x="11" y="3" width="1" height="12" fill="#000"/><rect x="1" y="1" width="10" height="13" fill="#fff"/><rect x="9" y="1" width="1" height="1" fill="#000"/><rect x="10" y="1" width="1" height="1" fill="#000"/><rect x="10" y="2" width="1" height="1" fill="#fff"/><rect x="11" y="2" width="1" height="1" fill="#000"/><rect x="9" y="2" width="1" height="1" fill="#000"/><rect x="10" y="3" width="1" height="1" fill="#000"/><rect x="3" y="4" width="1" height="1" fill="#080"/><rect x="5" y="4" width="1" height="1" fill="#080"/><rect x="7" y="4" width="1" height="1" fill="#080"/><rect x="9" y="4" width="1" height="1" fill="#080"/><rect x="3" y="6" width="1" height="1" fill="#080"/><rect x="3" y="8" width="1" height="1" fill="#080"/><rect x="3" y="10" width="1" height="1" fill="#080"/><rect x="5" y="11" width="1" height="1" fill="#080"/><rect x="7" y="11" width="1" height="1" fill="#080"/><rect x="4" y="5" width="1" height="7" fill="#000"/><rect x="5" y="6" width="3" height="5" fill="#f00"/><rect x="6" y="8" width="2" height="1" fill="#fff"/><rect x="6" y="10" width="2" height="1" fill="#fff"/><rect x="8" y="5" width="1" height="4" fill="#080"/><rect x="9" y="6" width="1" height="2" fill="#080"/><rect x="8" y="9" width="1" height="2" fill="#080"/><rect x="3" y="12" width="7" height="1" fill="#000"/><rect x="9" y="8" width="1" height="5" fill="#000"/><rect x="10" y="6" width="1" height="1" fill="#00f"/><rect x="10" y="7" width="1" height="1" fill="#00f"/><rect x="10" y="8" width="1" height="1" fill="#00f"/><rect x="11" y="5" width="1" height="1" fill="#00f"/><rect x="11" y="6" width="1" height="1" fill="#00f"/><rect x="11" y="7" width="1" height="1" fill="#00f"/><rect x="12" y="4" width="1" height="1" fill="#00f"/><rect x="12" y="5" width="1" height="1" fill="#00f"/><rect x="12" y="6" width="1" height="1" fill="#00f"/><rect x="13" y="3" width="1" height="1" fill="#00f"/><rect x="13" y="4" width="1" height="1" fill="#00f"/><rect x="13" y="5" width="1" height="1" fill="#00f"/><rect x="14" y="2" width="1" height="1" fill="#00f"/><rect x="14" y="3" width="1" height="1" fill="#00f"/><rect x="14" y="4" width="1" height="1" fill="#00f"/><rect x="15" y="2" width="1" height="1" fill="#00f"/><rect x="15" y="3" width="1" height="1" fill="#00f"/></svg><span><em>陈井荣</em></span></td><td><em>女</em></td><td>150429197001042165</td><td>130820340778</td><td><em>内蒙古</em></td><td>1970-01-04</td><td class="u"><em>湖北省人力资源与社</em><br><em>会保障厅</em></td><td>2013-05-25</td><td>2013-03-25</td><td class="op"><a><em>修改</em></a> | <a><em>删除</em></a></td></tr>
<tr style="height:39px"><td><i class="cb"></i></td><td>542</td><td class="nm"><svg class="ic" width="16" height="15"><rect x="0" y="0" width="10" height="1" fill="#000"/><rect x="0" y="0" width="1" height="15" fill="#000"/><rect x="0" y="14" width="12" height="1" fill="#000"/><rect x="11" y="3" width="1" height="12" fill="#000"/><rect x="1" y="1" width="10" height="13" fill="#fff"/><rect x="9" y="1" width="1" height="1" fill="#000"/><rect x="10" y="1" width="1" height="1" fill="#000"/><rect x="10" y="2" width="1" height="1" fill="#fff"/><rect x="11" y="2" width="1" height="1" fill="#000"/><rect x="9" y="2" width="1" height="1" fill="#000"/><rect x="10" y="3" width="1" height="1" fill="#000"/><rect x="3" y="4" width="1" height="1" fill="#080"/><rect x="5" y="4" width="1" height="1" fill="#080"/><rect x="7" y="4" width="1" height="1" fill="#080"/><rect x="9" y="4" width="1" height="1" fill="#080"/><rect x="3" y="6" width="1" height="1" fill="#080"/><rect x="3" y="8" width="1" height="1" fill="#080"/><rect x="3" y="10" width="1" height="1" fill="#080"/><rect x="5" y="11" width="1" height="1" fill="#080"/><rect x="7" y="11" width="1" height="1" fill="#080"/><rect x="4" y="5" width="1" height="7" fill="#000"/><rect x="5" y="6" width="3" height="5" fill="#f00"/><rect x="6" y="8" width="2" height="1" fill="#fff"/><rect x="6" y="10" width="2" height="1" fill="#fff"/><rect x="8" y="5" width="1" height="4" fill="#080"/><rect x="9" y="6" width="1" height="2" fill="#080"/><rect x="8" y="9" width="1" height="2" fill="#080"/><rect x="3" y="12" width="7" height="1" fill="#000"/><rect x="9" y="8" width="1" height="5" fill="#000"/><rect x="10" y="6" width="1" height="1" fill="#00f"/><rect x="10" y="7" width="1" height="1" fill="#00f"/><rect x="10" y="8" width="1" height="1" fill="#00f"/><rect x="11" y="5" width="1" height="1" fill="#00f"/><rect x="11" y="6" width="1" height="1" fill="#00f"/><rect x="11" y="7" width="1" height="1" fill="#00f"/><rect x="12" y="4" width="1" height="1" fill="#00f"/><rect x="12" y="5" width="1" height="1" fill="#00f"/><rect x="12" y="6" width="1" height="1" fill="#00f"/><rect x="13" y="3" width="1" height="1" fill="#00f"/><rect x="13" y="4" width="1" height="1" fill="#00f"/><rect x="13" y="5" width="1" height="1" fill="#00f"/><rect x="14" y="2" width="1" height="1" fill="#00f"/><rect x="14" y="3" width="1" height="1" fill="#00f"/><rect x="14" y="4" width="1" height="1" fill="#00f"/><rect x="15" y="2" width="1" height="1" fill="#00f"/><rect x="15" y="3" width="1" height="1" fill="#00f"/></svg><span><em>罗世发</em></span></td><td><em>男</em></td><td>522723198905044132</td><td>140830345563</td><td><em>贵州省</em></td><td>1989-05-04</td><td class="u"><em>湖北省人力资源与社</em><br><em>会保障厅</em></td><td>2014-09-25</td><td>2014-07-25</td><td class="op"><a><em>修改</em></a> | <a><em>删除</em></a></td></tr>
<tr class="hl" style="height:39px"><td><i class="cb"></i></td><td>541</td><td class="nm"><svg class="ic" width="16" height="15"><rect x="0" y="0" width="10" height="1" fill="#000"/><rect x="0" y="0" width="1" height="15" fill="#000"/><rect x="0" y="14" width="12" height="1" fill="#000"/><rect x="11" y="3" width="1" height="12" fill="#000"/><rect x="1" y="1" width="10" height="13" fill="#fff"/><rect x="9" y="1" width="1" height="1" fill="#000"/><rect x="10" y="1" width="1" height="1" fill="#000"/><rect x="10" y="2" width="1" height="1" fill="#fff"/><rect x="11" y="2" width="1" height="1" fill="#000"/><rect x="9" y="2" width="1" height="1" fill="#000"/><rect x="10" y="3" width="1" height="1" fill="#000"/><rect x="3" y="4" width="1" height="1" fill="#080"/><rect x="5" y="4" width="1" height="1" fill="#080"/><rect x="7" y="4" width="1" height="1" fill="#080"/><rect x="9" y="4" width="1" height="1" fill="#080"/><rect x="3" y="6" width="1" height="1" fill="#080"/><rect x="3" y="8" width="1" height="1" fill="#080"/><rect x="3" y="10" width="1" height="1" fill="#080"/><rect x="5" y="11" width="1" height="1" fill="#080"/><rect x="7" y="11" width="1" height="1" fill="#080"/><rect x="4" y="5" width="1" height="7" fill="#000"/><rect x="5" y="6" width="3" height="5" fill="#f00"/><rect x="6" y="8" width="2" height="1" fill="#fff"/><rect x="6" y="10" width="2" height="1" fill="#fff"/><rect x="8" y="5" width="1" height="4" fill="#080"/><rect x="9" y="6" width="1" height="2" fill="#080"/><rect x="8" y="9" width="1" height="2" fill="#080"/><rect x="3" y="12" width="7" height="1" fill="#000"/><rect x="9" y="8" width="1" height="5" fill="#000"/><rect x="10" y="6" width="1" height="1" fill="#00f"/><rect x="10" y="7" width="1" height="1" fill="#00f"/><rect x="10" y="8" width="1" height="1" fill="#00f"/><rect x="11" y="5" width="1" height="1" fill="#00f"/><rect x="11" y="6" width="1" height="1" fill="#00f"/><rect x="11" y="7" width="1" height="1" fill="#00f"/><rect x="12" y="4" width="1" height="1" fill="#00f"/><rect x="12" y="5" width="1" height="1" fill="#00f"/><rect x="12" y="6" width="1" height="1" fill="#00f"/><rect x="13" y="3" width="1" height="1" fill="#00f"/><rect x="13" y="4" width="1" height="1" fill="#00f"/><rect x="13" y="5" width="1" height="1" fill="#00f"/><rect x="14" y="2" width="1" height="1" fill="#00f"/><rect x="14" y="3" width="1" height="1" fill="#00f"/><rect x="14" y="4" width="1" height="1" fill="#00f"/><rect x="15" y="2" width="1" height="1" fill="#00f"/><rect x="15" y="3" width="1" height="1" fill="#00f"/></svg><span><em>袁飞</em></span></td><td><em>男</em></td><td>510213196004191618</td><td>110820345233</td><td><em>重庆市</em></td><td>1960-04-19</td><td class="u"><em>湖北省人力资源与社</em><br><em>会保障厅</em></td><td>2011-09-25</td><td>2011-07-25</td><td class="op"><a><em>修改</em></a> | <a><em>删除</em></a></td></tr>
<tr style="height:39px"><td><i class="cb"></i></td><td>540</td><td class="nm"><svg class="ic" width="16" height="15"><rect x="0" y="0" width="10" height="1" fill="#000"/><rect x="0" y="0" width="1" height="15" fill="#000"/><rect x="0" y="14" width="12" height="1" fill="#000"/><rect x="11" y="3" width="1" height="12" fill="#000"/><rect x="1" y="1" width="10" height="13" fill="#fff"/><rect x="9" y="1" width="1" height="1" fill="#000"/><rect x="10" y="1" width="1" height="1" fill="#000"/><rect x="10" y="2" width="1" height="1" fill="#fff"/><rect x="11" y="2" width="1" height="1" fill="#000"/><rect x="9" y="2" width="1" height="1" fill="#000"/><rect x="10" y="3" width="1" height="1" fill="#000"/><rect x="3" y="4" width="1" height="1" fill="#080"/><rect x="5" y="4" width="1" height="1" fill="#080"/><rect x="7" y="4" width="1" height="1" fill="#080"/><rect x="9" y="4" width="1" height="1" fill="#080"/><rect x="3" y="6" width="1" height="1" fill="#080"/><rect x="3" y="8" width="1" height="1" fill="#080"/><rect x="3" y="10" width="1" height="1" fill="#080"/><rect x="5" y="11" width="1" height="1" fill="#080"/><rect x="7" y="11" width="1" height="1" fill="#080"/><rect x="4" y="5" width="1" height="7" fill="#000"/><rect x="5" y="6" width="3" height="5" fill="#f00"/><rect x="6" y="8" width="2" height="1" fill="#fff"/><rect x="6" y="10" width="2" height="1" fill="#fff"/><rect x="8" y="5" width="1" height="4" fill="#080"/><rect x="9" y="6" width="1" height="2" fill="#080"/><rect x="8" y="9" width="1" height="2" fill="#080"/><rect x="3" y="12" width="7" height="1" fill="#000"/><rect x="9" y="8" width="1" height="5" fill="#000"/><rect x="10" y="6" width="1" height="1" fill="#00f"/><rect x="10" y="7" width="1" height="1" fill="#00f"/><rect x="10" y="8" width="1" height="1" fill="#00f"/><rect x="11" y="5" width="1" height="1" fill="#00f"/><rect x="11" y="6" width="1" height="1" fill="#00f"/><rect x="11" y="7" width="1" height="1" fill="#00f"/><rect x="12" y="4" width="1" height="1" fill="#00f"/><rect x="12" y="5" width="1" height="1" fill="#00f"/><rect x="12" y="6" width="1" height="1" fill="#00f"/><rect x="13" y="3" width="1" height="1" fill="#00f"/><rect x="13" y="4" width="1" height="1" fill="#00f"/><rect x="13" y="5" width="1" height="1" fill="#00f"/><rect x="14" y="2" width="1" height="1" fill="#00f"/><rect x="14" y="3" width="1" height="1" fill="#00f"/><rect x="14" y="4" width="1" height="1" fill="#00f"/><rect x="15" y="2" width="1" height="1" fill="#00f"/><rect x="15" y="3" width="1" height="1" fill="#00f"/></svg><span><em>刘小青</em></span></td><td><em>女</em></td><td>522501198809045822</td><td>140830345200</td><td><em>贵州省</em></td><td>1988-09-04</td><td class="u"><em>湖北省人力资源与社</em><br><em>会保障厅</em></td><td>2014-09-25</td><td>2014-07-25</td><td class="op"><a><em>修改</em></a> | <a><em>删除</em></a></td></tr>
<tr style="height:39px"><td><i class="cb"></i></td><td>539</td><td class="nm"><svg class="ic" width="16" height="15"><rect x="0" y="0" width="10" height="1" fill="#000"/><rect x="0" y="0" width="1" height="15" fill="#000"/><rect x="0" y="14" width="12" height="1" fill="#000"/><rect x="11" y="3" width="1" height="12" fill="#000"/><rect x="1" y="1" width="10" height="13" fill="#fff"/><rect x="9" y="1" width="1" height="1" fill="#000"/><rect x="10" y="1" width="1" height="1" fill="#000"/><rect x="10" y="2" width="1" height="1" fill="#fff"/><rect x="11" y="2" width="1" height="1" fill="#000"/><rect x="9" y="2" width="1" height="1" fill="#000"/><rect x="10" y="3" width="1" height="1" fill="#000"/><rect x="3" y="4" width="1" height="1" fill="#080"/><rect x="5" y="4" width="1" height="1" fill="#080"/><rect x="7" y="4" width="1" height="1" fill="#080"/><rect x="9" y="4" width="1" height="1" fill="#080"/><rect x="3" y="6" width="1" height="1" fill="#080"/><rect x="3" y="8" width="1" height="1" fill="#080"/><rect x="3" y="10" width="1" height="1" fill="#080"/><rect x="5" y="11" width="1" height="1" fill="#080"/><rect x="7" y="11" width="1" height="1" fill="#080"/><rect x="4" y="5" width="1" height="7" fill="#000"/><rect x="5" y="6" width="3" height="5" fill="#f00"/><rect x="6" y="8" width="2" height="1" fill="#fff"/><rect x="6" y="10" width="2" height="1" fill="#fff"/><rect x="8" y="5" width="1" height="4" fill="#080"/><rect x="9" y="6" width="1" height="2" fill="#080"/><rect x="8" y="9" width="1" height="2" fill="#080"/><rect x="3" y="12" width="7" height="1" fill="#000"/><rect x="9" y="8" width="1" height="5" fill="#000"/><rect x="10" y="6" width="1" height="1" fill="#00f"/><rect x="10" y="7" width="1" height="1" fill="#00f"/><rect x="10" y="8" width="1" height="1" fill="#00f"/><rect x="11" y="5" width="1" height="1" fill="#00f"/><rect x="11" y="6" width="1" height="1" fill="#00f"/><rect x="11" y="7" width="1" height="1" fill="#00f"/><rect x="12" y="4" width="1" height="1" fill="#00f"/><rect x="12" y="5" width="1" height="1" fill="#00f"/><rect x="12" y="6" width="1" height="1" fill="#00f"/><rect x="13" y="3" width="1" height="1" fill="#00f"/><rect x="13" y="4" width="1" height="1" fill="#00f"/><rect x="13" y="5" width="1" height="1" fill="#00f"/><rect x="14" y="2" width="1" height="1" fill="#00f"/><rect x="14" y="3" width="1" height="1" fill="#00f"/><rect x="14" y="4" width="1" height="1" fill="#00f"/><rect x="15" y="2" width="1" height="1" fill="#00f"/><rect x="15" y="3" width="1" height="1" fill="#00f"/></svg><span><em>曾健萍</em></span></td><td><em>女</em></td><td>520112197010161743</td><td>110820340669</td><td><em>贵州省</em></td><td>1970-10-16</td><td class="u"><em>湖北省人力资源与社</em><br><em>会保障厅</em></td><td>2011-09-25</td><td>2011-07-25</td><td class="op"><a><em>修改</em></a> | <a><em>删除</em></a></td></tr>
<tr style="height:39px"><td><i class="cb"></i></td><td>538</td><td class="nm"><svg class="ic" width="16" height="15"><rect x="0" y="0" width="10" height="1" fill="#000"/><rect x="0" y="0" width="1" height="15" fill="#000"/><rect x="0" y="14" width="12" height="1" fill="#000"/><rect x="11" y="3" width="1" height="12" fill="#000"/><rect x="1" y="1" width="10" height="13" fill="#fff"/><rect x="9" y="1" width="1" height="1" fill="#000"/><rect x="10" y="1" width="1" height="1" fill="#000"/><rect x="10" y="2" width="1" height="1" fill="#fff"/><rect x="11" y="2" width="1" height="1" fill="#000"/><rect x="9" y="2" width="1" height="1" fill="#000"/><rect x="10" y="3" width="1" height="1" fill="#000"/><rect x="3" y="4" width="1" height="1" fill="#080"/><rect x="5" y="4" width="1" height="1" fill="#080"/><rect x="7" y="4" width="1" height="1" fill="#080"/><rect x="9" y="4" width="1" height="1" fill="#080"/><rect x="3" y="6" width="1" height="1" fill="#080"/><rect x="3" y="8" width="1" height="1" fill="#080"/><rect x="3" y="10" width="1" height="1" fill="#080"/><rect x="5" y="11" width="1" height="1" fill="#080"/><rect x="7" y="11" width="1" height="1" fill="#080"/><rect x="4" y="5" width="1" height="7" fill="#000"/><rect x="5" y="6" width="3" height="5" fill="#f00"/><rect x="6" y="8" width="2" height="1" fill="#fff"/><rect x="6" y="10" width="2" height="1" fill="#fff"/><rect x="8" y="5" width="1" height="4" fill="#080"/><rect x="9" y="6" width="1" height="2" fill="#080"/><rect x="8" y="9" width="1" height="2" fill="#080"/><rect x="3" y="12" width="7" height="1" fill="#000"/><rect x="9" y="8" width="1" height="5" fill="#000"/><rect x="10" y="6" width="1" height="1" fill="#00f"/><rect x="10" y="7" width="1" height="1" fill="#00f"/><rect x="10" y="8" width="1" height="1" fill="#00f"/><rect x="11" y="5" width="1" height="1" fill="#00f"/><rect x="11" y="6" width="1" height="1" fill="#00f"/><rect x="11" y="7" width="1" height="1" fill="#00f"/><rect x="12" y="4" width="1" height="1" fill="#00f"/><rect x="12" y="5" width="1" height="1" fill="#00f"/><rect x="12" y="6" width="1" height="1" fill="#00f"/><rect x="13" y="3" width="1" height="1" fill="#00f"/><rect x="13" y="4" width="1" height="1" fill="#00f"/><rect x="13" y="5" width="1" height="1" fill="#00f"/><rect x="14" y="2" width="1" height="1" fill="#00f"/><rect x="14" y="3" width="1" height="1" fill="#00f"/><rect x="14" y="4" width="1" height="1" fill="#00f"/><rect x="15" y="2" width="1" height="1" fill="#00f"/><rect x="15" y="3" width="1" height="1" fill="#00f"/></svg><span><em>潘胜章</em></span></td><td><em>男</em></td><td>522527196810272314</td><td>140820348895</td><td><em>贵州省</em></td><td>1968-10-27</td><td class="u"><em>湖北省人力资源与社</em><br><em>会保障厅</em></td><td>2014-09-25</td><td>2014-07-25</td><td class="op"><a><em>修改</em></a> | <a><em>删除</em></a></td></tr>
<tr style="height:39px"><td><i class="cb"></i></td><td>537</td><td class="nm"><svg class="ic" width="16" height="15"><rect x="0" y="0" width="10" height="1" fill="#000"/><rect x="0" y="0" width="1" height="15" fill="#000"/><rect x="0" y="14" width="12" height="1" fill="#000"/><rect x="11" y="3" width="1" height="12" fill="#000"/><rect x="1" y="1" width="10" height="13" fill="#fff"/><rect x="9" y="1" width="1" height="1" fill="#000"/><rect x="10" y="1" width="1" height="1" fill="#000"/><rect x="10" y="2" width="1" height="1" fill="#fff"/><rect x="11" y="2" width="1" height="1" fill="#000"/><rect x="9" y="2" width="1" height="1" fill="#000"/><rect x="10" y="3" width="1" height="1" fill="#000"/><rect x="3" y="4" width="1" height="1" fill="#080"/><rect x="5" y="4" width="1" height="1" fill="#080"/><rect x="7" y="4" width="1" height="1" fill="#080"/><rect x="9" y="4" width="1" height="1" fill="#080"/><rect x="3" y="6" width="1" height="1" fill="#080"/><rect x="3" y="8" width="1" height="1" fill="#080"/><rect x="3" y="10" width="1" height="1" fill="#080"/><rect x="5" y="11" width="1" height="1" fill="#080"/><rect x="7" y="11" width="1" height="1" fill="#080"/><rect x="4" y="5" width="1" height="7" fill="#000"/><rect x="5" y="6" width="3" height="5" fill="#f00"/><rect x="6" y="8" width="2" height="1" fill="#fff"/><rect x="6" y="10" width="2" height="1" fill="#fff"/><rect x="8" y="5" width="1" height="4" fill="#080"/><rect x="9" y="6" width="1" height="2" fill="#080"/><rect x="8" y="9" width="1" height="2" fill="#080"/><rect x="3" y="12" width="7" height="1" fill="#000"/><rect x="9" y="8" width="1" height="5" fill="#000"/><rect x="10" y="6" width="1" height="1" fill="#00f"/><rect x="10" y="7" width="1" height="1" fill="#00f"/><rect x="10" y="8" width="1" height="1" fill="#00f"/><rect x="11" y="5" width="1" height="1" fill="#00f"/><rect x="11" y="6" width="1" height="1" fill="#00f"/><rect x="11" y="7" width="1" height="1" fill="#00f"/><rect x="12" y="4" width="1" height="1" fill="#00f"/><rect x="12" y="5" width="1" height="1" fill="#00f"/><rect x="12" y="6" width="1" height="1" fill="#00f"/><rect x="13" y="3" width="1" height="1" fill="#00f"/><rect x="13" y="4" width="1" height="1" fill="#00f"/><rect x="13" y="5" width="1" height="1" fill="#00f"/><rect x="14" y="2" width="1" height="1" fill="#00f"/><rect x="14" y="3" width="1" height="1" fill="#00f"/><rect x="14" y="4" width="1" height="1" fill="#00f"/><rect x="15" y="2" width="1" height="1" fill="#00f"/><rect x="15" y="3" width="1" height="1" fill="#00f"/></svg><span><em>万泉</em></span></td><td><em>男</em></td><td>520103198405243610</td><td>140820340558</td><td><em>贵州省</em></td><td>1984-05-24</td><td class="u"><em>湖北省人力资源与社</em><br><em>会保障厅</em></td><td>2014-09-25</td><td>2014-07-25</td><td class="op"><a><em>修改</em></a> | <a><em>删除</em></a></td></tr>
<tr style="height:39px"><td><i class="cb"></i></td><td>536</td><td class="nm"><svg class="ic" width="16" height="15"><rect x="0" y="0" width="10" height="1" fill="#000"/><rect x="0" y="0" width="1" height="15" fill="#000"/><rect x="0" y="14" width="12" height="1" fill="#000"/><rect x="11" y="3" width="1" height="12" fill="#000"/><rect x="1" y="1" width="10" height="13" fill="#fff"/><rect x="9" y="1" width="1" height="1" fill="#000"/><rect x="10" y="1" width="1" height="1" fill="#000"/><rect x="10" y="2" width="1" height="1" fill="#fff"/><rect x="11" y="2" width="1" height="1" fill="#000"/><rect x="9" y="2" width="1" height="1" fill="#000"/><rect x="10" y="3" width="1" height="1" fill="#000"/><rect x="3" y="4" width="1" height="1" fill="#080"/><rect x="5" y="4" width="1" height="1" fill="#080"/><rect x="7" y="4" width="1" height="1" fill="#080"/><rect x="9" y="4" width="1" height="1" fill="#080"/><rect x="3" y="6" width="1" height="1" fill="#080"/><rect x="3" y="8" width="1" height="1" fill="#080"/><rect x="3" y="10" width="1" height="1" fill="#080"/><rect x="5" y="11" width="1" height="1" fill="#080"/><rect x="7" y="11" width="1" height="1" fill="#080"/><rect x="4" y="5" width="1" height="7" fill="#000"/><rect x="5" y="6" width="3" height="5" fill="#f00"/><rect x="6" y="8" width="2" height="1" fill="#fff"/><rect x="6" y="10" width="2" height="1" fill="#fff"/><rect x="8" y="5" width="1" height="4" fill="#080"/><rect x="9" y="6" width="1" height="2" fill="#080"/><rect x="8" y="9" width="1" height="2" fill="#080"/><rect x="3" y="12" width="7" height="1" fill="#000"/><rect x="9" y="8" width="1" height="5" fill="#000"/><rect x="10" y="6" width="1" height="1" fill="#00f"/><rect x="10" y="7" width="1" height="1" fill="#00f"/><rect x="10" y="8" width="1" height="1" fill="#00f"/><rect x="11" y="5" width="1" height="1" fill="#00f"/><rect x="11" y="6" width="1" height="1" fill="#00f"/><rect x="11" y="7" width="1" height="1" fill="#00f"/><rect x="12" y="4" width="1" height="1" fill="#00f"/><rect x="12" y="5" width="1" height="1" fill="#00f"/><rect x="12" y="6" width="1" height="1" fill="#00f"/><rect x="13" y="3" width="1" height="1" fill="#00f"/><rect x="13" y="4" width="1" height="1" fill="#00f"/><rect x="13" y="5" width="1" height="1" fill="#00f"/><rect x="14" y="2" width="1" height="1" fill="#00f"/><rect x="14" y="3" width="1" height="1" fill="#00f"/><rect x="14" y="4" width="1" height="1" fill="#00f"/><rect x="15" y="2" width="1" height="1" fill="#00f"/><rect x="15" y="3" width="1" height="1" fill="#00f"/></svg><span><em>王小凤</em></span></td><td><em>男</em></td><td>43252219731215405X</td><td>140830347485</td><td><em>湖南省</em></td><td>1973-12-15</td><td class="u"><em>湖北省人力资源与社</em><br><em>会保障厅</em></td><td>2014-09-25</td><td>2014-07-25</td><td class="op"><a><em>修改</em></a> | <a><em>删除</em></a></td></tr>
 </table>
</div>
</body></html>
